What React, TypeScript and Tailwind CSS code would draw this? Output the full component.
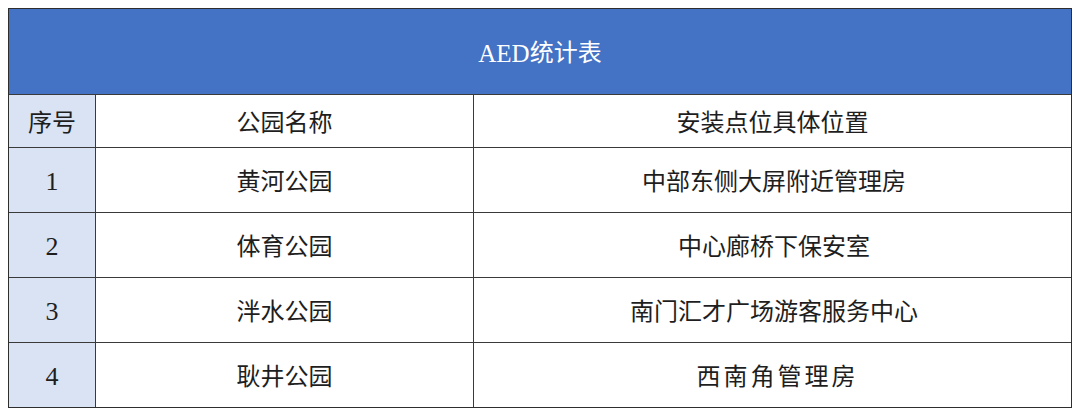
const rows = [
  { no: '1', park: '黄河公园', place: '中部东侧大屏附近管理房', wide: false },
  { no: '2', park: '体育公园', place: '中心廊桥下保安室', wide: false },
  { no: '3', park: '泮水公园', place: '南门汇才广场游客服务中心', wide: false },
  { no: '4', park: '耿井公园', place: '西南角管理房', wide: true },
]

const font = { fontFamily: '"Liberation Serif", "Noto Sans CJK SC", serif' }

export default function App() {
  return (
    <div className="bg-white w-[1080px] h-[417px] pt-2 pl-2" style={font}>
      <div className="w-[1064px] border border-[#2e2e2e] bg-[#3a3a3a] grid grid-cols-[86px_377px_597px] grid-rows-[85px_52px_64px_64px_64px_64px] gap-px text-[24px] leading-none text-[#1e1e1e]">
        <div className="col-span-3 bg-[#4472c4] text-white flex items-center justify-center pt-[3px]">
          <span className="text-[25px]">AED</span>统计表
        </div>
        <div className="bg-[#dae3f3] flex items-center justify-center pt-[3px]">序号</div>
        <div className="bg-white flex items-center justify-center pt-[3px]">公园名称</div>
        <div className="bg-white flex items-center justify-center pt-[3px]">安装点位具体位置</div>
        {rows.map((r) => (
          <div key={r.no} className="contents">
            <div className="bg-[#dae3f3] flex items-center justify-center pt-[3px] text-[26px]">{r.no}</div>
            <div className="bg-white flex items-center justify-center pt-[3px]">{r.park}</div>
            <div className={`bg-white flex items-center justify-center pt-[3px] ${r.wide ? 'tracking-[3px] pl-[10px]' : 'pl-[3px]'}`}>
              {r.place}
            </div>
          </div>
        ))}
      </div>
    </div>
  )
}
